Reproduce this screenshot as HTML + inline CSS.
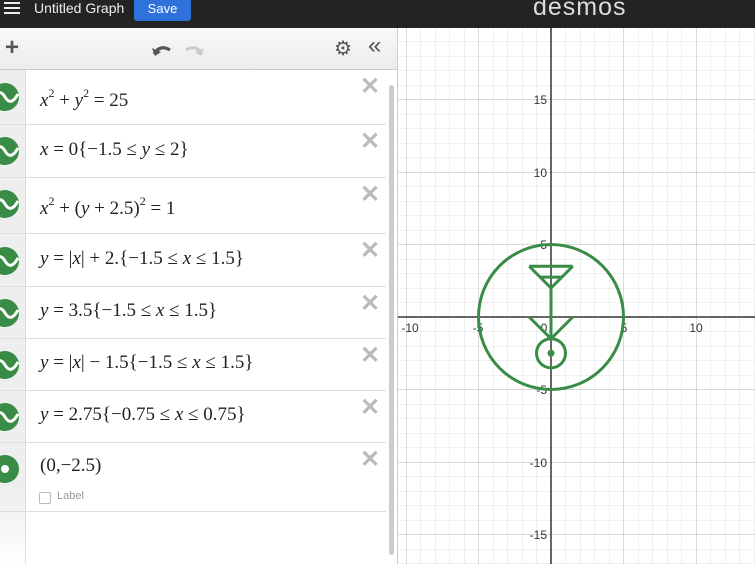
<!DOCTYPE html>
<html><head><style>
*{margin:0;padding:0;box-sizing:border-box}
html,body{width:755px;height:564px;overflow:hidden}
body{font-family:"Liberation Sans",sans-serif;background:#fff;position:relative}
#top{position:absolute;left:0;top:0;width:755px;height:28px;background:#232323;color:#fff}
#top .t{position:absolute;left:34px;top:0;font-size:14px;color:#eee}
#save{position:absolute;left:134px;top:0;width:57px;height:21px;background:#2f72dc;border-radius:0 0 3px 3px;font-size:13px;text-align:center;line-height:17px}
#logo{position:absolute;left:533px;top:-7px;font-size:25px;color:#ddd;letter-spacing:1px}
#left{position:absolute;left:0;top:28px;width:398px;height:536px;background:#fff;border-right:1px solid #ccc;overflow:hidden}
#tool{position:absolute;left:0;top:0;width:398px;height:42px;background:linear-gradient(#f8f8f8,#ececec);border-bottom:1px solid #ccc}
#gut{position:absolute;left:0;top:42px;width:26px;height:494px;background:linear-gradient(#eee 85%,#fff);border-right:1px solid #ddd}
.row{position:absolute;left:0;width:386px;border-bottom:1px solid #ddd}
.ic{position:absolute;left:-9px;width:28px;height:28px}
.m{position:absolute;left:40px;font-family:"Liberation Serif",serif;font-size:19px;color:#222;white-space:nowrap}
.m i{font-style:italic}
.m sup{font-size:12px;vertical-align:9px}
.x{position:absolute;left:360px;font-size:24px;color:#bbb;font-weight:bold}
#sb{position:absolute;left:389px;top:57px;width:5px;height:470px;background:#ccc;border-radius:3px}
#graph{position:absolute;left:398px;top:28px}
</style></head><body>
<div id="top">
<svg style="position:absolute;left:4px;top:1px" width="16" height="14"><rect y="1" width="16" height="2" fill="#eee"/><rect y="6" width="16" height="2" fill="#eee"/><rect y="11" width="16" height="2" fill="#eee"/></svg>
<div class="t">Untitled Graph</div>
<div id="save">Save</div>
<div id="logo">desmos</div>
</div>
<div id="left">
<div id="tool">
<div style="position:absolute;left:5px;top:6px;font-size:24px;color:#555;font-weight:bold">+</div>
<svg style="position:absolute;left:150px;top:13px" width="60" height="18"><path d="M4 13 Q10 3 20 9" stroke="#555" stroke-width="3" fill="none"/><path d="M2 7 L5 15 L11 11Z" fill="#555"/><path d="M52 13 Q46 3 36 9" stroke="#ccc" stroke-width="3" fill="none"/><path d="M54 7 L51 15 L45 11Z" fill="#ccc"/></svg>
<div style="position:absolute;left:334px;top:8px;font-size:20px;color:#555">⚙</div>
<div style="position:absolute;left:368px;top:4px;font-size:24px;color:#555">«</div>
</div>
<div id="gut"></div>
<div class="row" style="top:42px;height:55px"><svg class="ic" style="top:13px" viewBox="0 0 28 28"><circle cx="14" cy="14" r="14" fill="#388c46"/><path d="M3 17 Q8 4 14 14 T27 11" stroke="#fff" stroke-width="3" fill="none"/></svg><div class="m" style="top:16px"><i>x</i><sup>2</sup> + <i>y</i><sup>2</sup> = 25</div><div class="x" style="top:2px">✕</div></div>
<div class="row" style="top:97px;height:53px"><svg class="ic" style="top:12px" viewBox="0 0 28 28"><circle cx="14" cy="14" r="14" fill="#388c46"/><path d="M3 17 Q8 4 14 14 T27 11" stroke="#fff" stroke-width="3" fill="none"/></svg><div class="m" style="top:14px"><i>x</i> = 0{−1.5 ≤ <i>y</i> ≤ 2}</div><div class="x" style="top:2px">✕</div></div>
<div class="row" style="top:150px;height:56px"><svg class="ic" style="top:12px" viewBox="0 0 28 28"><circle cx="14" cy="14" r="14" fill="#388c46"/><path d="M3 17 Q8 4 14 14 T27 11" stroke="#fff" stroke-width="3" fill="none"/></svg><div class="m" style="top:16px"><i>x</i><sup>2</sup> + (<i>y</i> + 2.5)<sup>2</sup> = 1</div><div class="x" style="top:2px">✕</div></div>
<div class="row" style="top:206px;height:53px"><svg class="ic" style="top:13px" viewBox="0 0 28 28"><circle cx="14" cy="14" r="14" fill="#388c46"/><path d="M3 17 Q8 4 14 14 T27 11" stroke="#fff" stroke-width="3" fill="none"/></svg><div class="m" style="top:14px"><i>y</i> = |<i>x</i>| + 2.{−1.5 ≤ <i>x</i> ≤ 1.5}</div><div class="x" style="top:2px">✕</div></div>
<div class="row" style="top:259px;height:52px"><svg class="ic" style="top:12px" viewBox="0 0 28 28"><circle cx="14" cy="14" r="14" fill="#388c46"/><path d="M3 17 Q8 4 14 14 T27 11" stroke="#fff" stroke-width="3" fill="none"/></svg><div class="m" style="top:13px"><i>y</i> = 3.5{−1.5 ≤ <i>x</i> ≤ 1.5}</div><div class="x" style="top:2px">✕</div></div>
<div class="row" style="top:311px;height:52px"><svg class="ic" style="top:12px" viewBox="0 0 28 28"><circle cx="14" cy="14" r="14" fill="#388c46"/><path d="M3 17 Q8 4 14 14 T27 11" stroke="#fff" stroke-width="3" fill="none"/></svg><div class="m" style="top:13px"><i>y</i> = |<i>x</i>| − 1.5{−1.5 ≤ <i>x</i> ≤ 1.5}</div><div class="x" style="top:2px">✕</div></div>
<div class="row" style="top:363px;height:52px"><svg class="ic" style="top:12px" viewBox="0 0 28 28"><circle cx="14" cy="14" r="14" fill="#388c46"/><path d="M3 17 Q8 4 14 14 T27 11" stroke="#fff" stroke-width="3" fill="none"/></svg><div class="m" style="top:13px"><i>y</i> = 2.75{−0.75 ≤ <i>x</i> ≤ 0.75}</div><div class="x" style="top:2px">✕</div></div>
<div class="row" style="top:415px;height:69px"><svg class="ic" style="top:12px" viewBox="0 0 28 28"><circle cx="14" cy="14" r="14" fill="#388c46"/><circle cx="14" cy="14" r="4" fill="#fff"/></svg><div class="m" style="top:12px">(0,−2.5)</div><div class="x" style="top:2px">✕</div>
<div style="position:absolute;left:39px;top:49px;width:12px;height:12px;border:1px solid #bbb;border-radius:2px"></div><div style="position:absolute;left:57px;top:47px;font-size:11px;color:#999">Label</div></div>
<div id="sb"></div>
</div>
<svg id="graph" width="357" height="536" font-family="Liberation Sans" font-size="12">
<defs>
<pattern id="mi" width="14.5" height="14.5" x="8" y="13.5" patternUnits="userSpaceOnUse"><path d="M0 0V14.5M0 0H14.5" stroke="#e0e0e0" stroke-width="1" fill="none"/></pattern>
<pattern id="ma" width="72.5" height="72.5" x="8" y="71.5" patternUnits="userSpaceOnUse"><path d="M0 0V72.5M0 0H72.5" stroke="#b5b5b5" stroke-width="1" fill="none"/></pattern>
</defs>
<rect width="357" height="536" fill="#fff"/>
<rect width="357" height="536" fill="url(#mi)"/>
<rect width="357" height="536" fill="url(#ma)"/>
<line x1="153" y1="0" x2="153" y2="536" stroke="#333" stroke-width="1.5"/>
<line x1="0" y1="289" x2="357" y2="289" stroke="#333" stroke-width="1.5"/>
<g fill="#333" text-anchor="middle">
<text x="12" y="304">-10</text><text x="80" y="304">-5</text><text x="146" y="304">0</text><text x="226" y="304">5</text><text x="298" y="304">10</text>
</g>
<g fill="#333" text-anchor="end">
<text x="149" y="76">15</text><text x="149" y="149">10</text><text x="149" y="221">5</text><text x="149" y="366">-5</text><text x="149" y="439">-10</text><text x="149" y="511">-15</text>
</g>
<g stroke="#388c46" stroke-width="3" fill="none">
<circle cx="153" cy="289" r="72.5"/>
<circle cx="153" cy="325.25" r="14.5"/>
<line x1="153" y1="310.75" x2="153" y2="260"/>
<polyline points="131.25,238.25 153,260 174.75,238.25"/>
<line x1="131.25" y1="238.25" x2="174.75" y2="238.25"/>
<line x1="142.1" y1="249.1" x2="163.9" y2="249.1"/>
<polyline points="131.25,289 153,310.75 174.75,289"/>
</g>
<circle cx="153" cy="325.25" r="3.5" fill="#388c46"/>
</svg>
</body></html>
